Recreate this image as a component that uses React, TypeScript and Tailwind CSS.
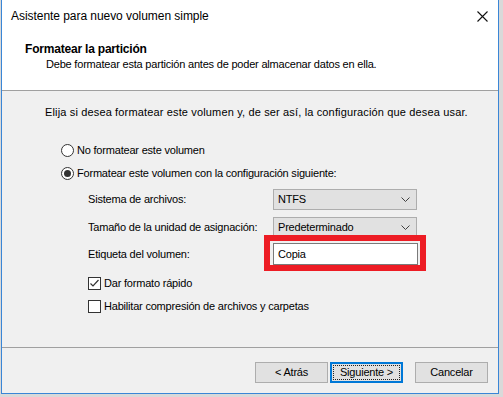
import React from "react";

const font = { fontFamily: '"Liberation Sans", Arial, sans-serif' };

function Radio({ checked, label }: { checked?: boolean; label: string }) {
  return (
    <div className="flex items-center h-[16px]">
      <span className="w-[13px] h-[13px] rounded-full border border-[#333333] bg-white flex items-center justify-center">
        {checked && <span className="w-[7px] h-[7px] rounded-full bg-[#333333]" />}
      </span>
      <span className="ml-[3px]">{label}</span>
    </div>
  );
}

function Check({ checked, label }: { checked?: boolean; label: string }) {
  return (
    <div className="flex items-center h-[15px]">
      <span className="w-[13px] h-[13px] border border-[#333333] bg-white flex items-center justify-center">
        {checked && (
          <svg width="11" height="11" viewBox="0 0 11 11">
            <polyline points="1.5,5.5 4,8 9.5,2" fill="none" stroke="#333333" strokeWidth="1.2" />
          </svg>
        )}
      </span>
      <span className="ml-[3px]">{label}</span>
    </div>
  );
}

function Combo({ value }: { value: string }) {
  return (
    <div className="w-[144px] h-[21px] bg-[#e1e1e1] border border-[#adadad] flex items-center justify-between pl-[4px] pr-[6px]">
      <span>{value}</span>
      <svg width="9" height="5" viewBox="0 0 9 5">
        <polyline points="0.5,0.5 4.5,4.5 8.5,0.5" fill="none" stroke="#404040" strokeWidth="1" />
      </svg>
    </div>
  );
}

function Button({ label, primary }: { label: string; primary?: boolean }) {
  if (primary) {
    return (
      <div className="w-[73px] h-[21px] bg-[#e1e1e1] border-2 border-[#0078d7] flex items-center justify-center p-[1px]">
        <div className="w-full h-full border border-dotted border-[#222222] flex items-center justify-center">
          {label}
        </div>
      </div>
    );
  }
  return (
    <div className="w-[73px] h-[21px] bg-[#e1e1e1] border border-[#adadad] flex items-center justify-center">
      {label}
    </div>
  );
}

export default function App() {
  return (
    <div className="w-[503px] h-[397px] bg-[#d9d9d9] text-[11px] leading-[15px] tracking-[-0.2px] text-black whitespace-nowrap" style={font}>
      <div className="ml-[1px] w-[498px] h-[394px] border-x border-b border-[#3a86d6] bg-white flex flex-col">
        {/* title bar */}
        <div className="h-[31px] flex items-center justify-between pl-[9px] pr-[9px] pt-[2px]">
          <span className="text-[12px] tracking-[-0.05px]">Asistente para nuevo volumen simple</span>
          <svg width="11" height="11" viewBox="0 0 11 11" className="mr-[1px]">
            <path d="M0.5 0.5 L10.5 10.5 M10.5 0.5 L0.5 10.5" stroke="#111111" strokeWidth="1.1" />
          </svg>
        </div>

        {/* header */}
        <div className="h-[60px] border-b border-[#a0a0a0] pl-[23px] pt-[11px]">
          <div className="font-bold text-[12px] tracking-[-0.2px]">Formatear la partición</div>
          <div className="ml-[21px]">Debe formatear esta partición antes de poder almacenar datos en ella.</div>
        </div>

        {/* body */}
        <div className="flex-1 bg-[#f0f0f0] border-b border-[#a0a0a0] flex flex-col">
          <div className="ml-[43px] mt-[14px] tracking-[0.15px]">
            Elija si desea formatear este volumen y, de ser así, la configuración que desea usar.
          </div>
          <div className="ml-[59px] mt-[22px]">
            <Radio label="No formatear este volumen" />
          </div>
          <div className="ml-[59px] mt-[7px]">
            <Radio checked label="Formatear este volumen con la configuración siguiente:" />
          </div>

          <div className="ml-[86px] mt-[8px] flex flex-col">
            <div className="flex items-center">
              <span className="w-[185px]">Sistema de archivos:</span>
              <Combo value="NTFS" />
            </div>
            <div className="flex items-center mt-[7px]">
              <span className="w-[185px]">Tamaño de la unidad de asignación:</span>
              <Combo value="Predeterminado" />
            </div>
            <div className="flex items-center mt-[5px]">
              <span className="w-[185px]">Etiqueta del volumen:</span>
              <div className="relative">
                <div className="w-[145px] h-[22px] bg-white border border-[#7a7a7a] flex items-center pl-[4px]">
                  Copia
                </div>
                <div className="absolute left-[-9px] top-[-8px] w-[162px] h-[36px] border-[6px] border-[#ed1c24] pointer-events-none" />
              </div>
            </div>
            <div className="mt-[11px]">
              <Check checked label="Dar formato rápido" />
            </div>
            <div className="mt-[8px]">
              <Check label="Habilitar compresión de archivos y carpetas" />
            </div>
          </div>
        </div>

        {/* footer */}
        <div className="h-[45px] bg-[#f0f0f0] flex justify-end items-start pt-[14px] pr-[10px]">
          <Button label="< Atrás" />
          <div className="ml-[2px]">
            <Button primary label="Siguiente >" />
          </div>
          <div className="ml-[12px]">
            <Button label="Cancelar" />
          </div>
        </div>
      </div>
    </div>
  );
}
